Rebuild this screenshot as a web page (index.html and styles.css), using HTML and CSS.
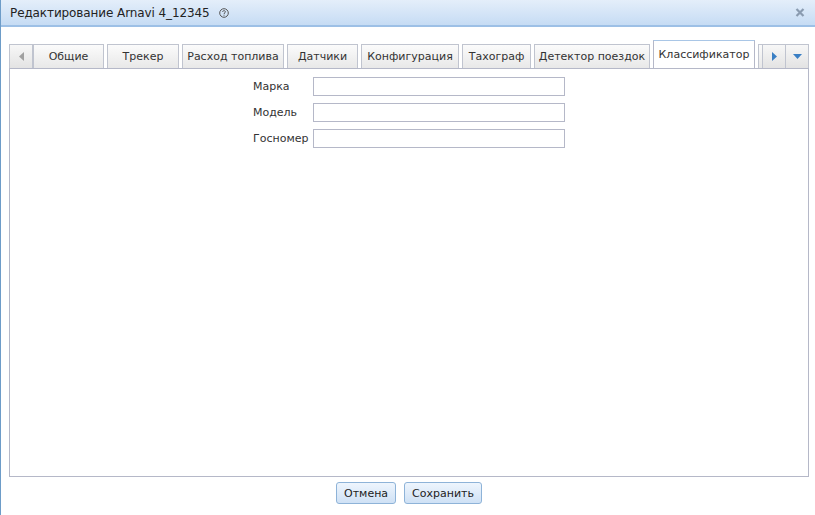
FILE: index.html
```html
<!DOCTYPE html>
<html>
<head>
<meta charset="utf-8">
<link rel="stylesheet" href="styles.css">
</head>
<body>
<div class="window">
  <div class="titlebar">
    <span class="title">Редактирование Arnavi 4_12345</span>
    <svg class="help" width="10" height="10" viewBox="0 0 10 10"><circle cx="5" cy="5" r="4.3" fill="none" stroke="#555" stroke-width="1"/><path d="M3.6 3.9 C3.6 2.3 6.4 2.3 6.4 3.8 C6.4 4.9 5 4.8 5 6" fill="none" stroke="#555" stroke-width="1"/><rect x="4.5" y="6.7" width="1" height="1" fill="#555"/></svg>
    <span class="spacer"></span>
    <svg class="close" width="10" height="9" viewBox="0 0 10 9"><path d="M1.5 1 L8.5 8 M8.5 1 L1.5 8" stroke="#8a9bb0" stroke-width="2.2"/></svg>
  </div>
  <div class="body">
    <div class="tabbar">
      <div class="scroller left"><svg width="5" height="9" viewBox="0 0 5 9"><path d="M5 0 L0 4.5 L5 9Z" fill="#a0a0a0"/></svg></div>
      <div class="tabs">
        <div class="tab w71">Общие</div>
        <div class="tab w72">Трекер</div>
        <div class="tab w102">Расход топлива</div>
        <div class="tab w71">Датчики</div>
        <div class="tab w98">Конфигурация</div>
        <div class="tab w69">Тахограф</div>
        <div class="tab w116">Детектор поездок</div>
        <div class="tab active w102">Классификатор</div>
        <div class="tab stub"></div>
      </div>
      <div class="scroller right"><svg width="5" height="9" viewBox="0 0 5 9"><path d="M0 0 L5 4.5 L0 9Z" fill="#3a7fc4"/></svg></div>
      <div class="scroller menu"><svg width="9" height="5" viewBox="0 0 9 5"><path d="M0 0 L9 0 L4.5 5Z" fill="#3a7fc4"/></svg></div>
    </div>
    <div class="panel">
      <div class="form">
        <div class="row"><label>Марка</label><input type="text"></div>
        <div class="row"><label>Модель</label><input type="text"></div>
        <div class="row"><label>Госномер</label><input type="text"></div>
      </div>
    </div>
    <div class="buttons">
      <button class="btn">Отмена</button>
      <button class="btn">Сохранить</button>
    </div>
  </div>
</div>
</body>
</html>
```
FILE: styles.css
```css
html, body { margin: 0; padding: 0; background: #fff; }
body { font-family: "DejaVu Sans", Verdana, sans-serif; color: #333; width: 815px; height: 515px; overflow: hidden; }
.window { border-left: 1px solid #6d9cc8; height: 515px; box-sizing: border-box; display: flex; flex-direction: column; }
.titlebar {
  height: 25px; border-bottom: 2px solid #9dc0e6;
  background: linear-gradient(#e4eefa, #c6dcf4);
  display: flex; align-items: center; padding: 0 10px 0 9px;
  font-size: 12px; color: #222;
}
.title { letter-spacing: -0.1px; }
.help { margin-left: 9px; margin-top: 1px; }
.spacer { flex: 1; }
.body { flex: 1; display: flex; flex-direction: column; padding: 0 6px 0 8px; }
.tabbar { display: flex; align-items: flex-end; margin-top: 12px; height: 29px; border-bottom: 1px solid #b5b8c8; }
.scroller {
  width: 22px; height: 23px; border: 1px solid #c0c4cf; border-bottom: none;
  background: linear-gradient(#f7f7f7, #e3e3e3);
  display: flex; align-items: center; justify-content: center; flex: none;
}
.scroller.left { width: 22px; }
.scroller.menu { border-left: none; width: 22px; }
.tabs { display: flex; align-items: flex-end; gap: 3px; flex: 1; overflow: hidden; padding-left: 0; }
.tab {
  height: 23px; box-sizing: content-box; border: 1px solid #c0c4cf; border-bottom: none;
  background: linear-gradient(#fbfbfb, #e8e8e8);
  font-size: 11px; color: #333; display: flex; align-items: center; justify-content: center;
  white-space: nowrap; flex: none;
}
.tab.active { background: #fff; border-color: #b5b8c8; border-top: 1px solid #a9c6e6; margin-bottom: -1px; padding-bottom: 1px; height: 27px; }
.w69 { width: 67px; } .w71 { width: 69px; } .w72 { width: 70px; } .w98 { width: 96px; }
.w102 { width: 100px; } .w116 { width: 114px; }
.tab.stub { width: 4px; }
.panel { height: 408px; border: 1px solid #b5b8c8; border-top: none; box-sizing: border-box; }
.form { display: flex; flex-direction: column; gap: 7px; padding: 8px 0 0 243px; }
.row { display: flex; align-items: center; height: 19px; }
.row label { width: 60px; font-size: 11px; color: #333; }
.row input { width: 252px; height: 19px; box-sizing: border-box; border: 1px solid #b5b8c8; margin: 0; padding: 0; }
.buttons { display: flex; justify-content: center; gap: 8px; padding-top: 5px; }
.btn {
  height: 22px; padding: 0 7px; font-family: inherit; font-size: 11px; color: #222;
  border: 1px solid #8eb3d8; border-radius: 3px;
  background: linear-gradient(#eef5fd, #cfe1f5);
}
```
